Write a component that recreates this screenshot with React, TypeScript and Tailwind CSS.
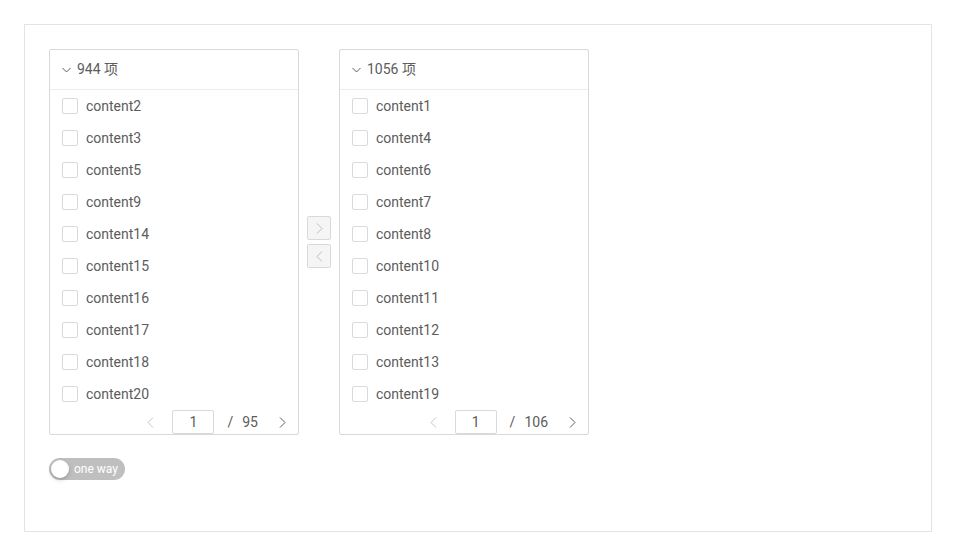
import React from "react";

const left = ["content2","content3","content5","content9","content14","content15","content16","content17","content18","content20"];
const right = ["content1","content4","content6","content7","content8","content10","content11","content12","content13","content19"];

function Chevron({ dir, className, w = 8, h = 12 }: { dir: "left" | "right" | "down"; className?: string; w?: number; h?: number }) {
  const d =
    dir === "left" ? `M${w - 1} 0.5 L1 ${h / 2} L${w - 1} ${h - 0.5}` :
    dir === "right" ? `M1 0.5 L${w - 1} ${h / 2} L1 ${h - 0.5}` :
    `M0.5 1 L${w / 2} ${h - 1} L${w - 0.5} 1`;
  return (
    <svg width={w} height={h} viewBox={`0 0 ${w} ${h}`} className={className} fill="none" stroke="currentColor" strokeWidth="1">
      <path d={d} />
    </svg>
  );
}

function List({ count, items, total }: { count: string; items: string[]; total: string }) {
  return (
    <div className="w-[250px] h-[386px] border border-[#d9d9d9] rounded-[2px] flex flex-col">
      <div className="h-[40px] border-b border-[#ececec] flex items-center pl-[12px] gap-[6px] text-[14px] text-[#5c5c5c]">
        <Chevron dir="down" w={9} h={6} />
        <span>{count} 项</span>
      </div>
      <div className="flex flex-col">
        {items.map((it) => (
          <div key={it} className="h-[32px] flex items-center pl-[12px] gap-[8px] text-[14px] text-[#5c5c5c]">
            <span className="w-[16px] h-[16px] border border-[#d9d9d9] rounded-[2px] bg-white" />
            <span>{it}</span>
          </div>
        ))}
      </div>
      <div className="flex items-center justify-end pr-[12px] h-[24px] text-[14px] text-[#5c5c5c]">
        <Chevron dir="left" w={7} h={11} className="text-[#c4c4c4] mr-[18px]" />
        <div className="w-[42px] h-[24px] border border-[#d9d9d9] rounded-[2px] flex items-center justify-center">1</div>
        <span className="ml-[13px] mr-[9px]">/</span>
        <span>{total}</span>
        <Chevron dir="right" w={7} h={11} className="ml-[21px]" />
      </div>
    </div>
  );
}

export default function App() {
  return (
    <div className="w-[956px] h-[556px] bg-white pt-[24px] pl-[24px]" style={{ fontFamily: "Roboto, 'Noto Sans CJK SC', sans-serif" }}>
      <div className="w-[908px] h-[508px] border border-[#e3e3e3] p-[24px]">
        <div className="flex items-center">
          <List count="944" items={left} total="95" />
          <div className="flex flex-col gap-[4px] mx-[8px]">
            <button className="w-[24px] h-[24px] border border-[#d9d9d9] bg-[#f5f5f5] rounded-[2px] flex items-center justify-center text-[#bfbfbf]">
              <Chevron dir="right" w={7} h={11} />
            </button>
            <button className="w-[24px] h-[24px] border border-[#d9d9d9] bg-[#f5f5f5] rounded-[2px] flex items-center justify-center text-[#bfbfbf]">
              <Chevron dir="left" w={7} h={11} />
            </button>
          </div>
          <List count="1056" items={right} total="106" />
        </div>
        <div className="mt-[23px] w-[76px] h-[22px] rounded-full bg-[#bfbfbf] relative flex items-center">
          <span className="absolute left-[2px] top-[2px] w-[18px] h-[18px] rounded-full bg-white shadow-[0_2px_4px_rgba(0,35,11,0.2)]" />
          <span className="ml-[25px] text-[12px] text-white">one way</span>
        </div>
      </div>
    </div>
  );
}
